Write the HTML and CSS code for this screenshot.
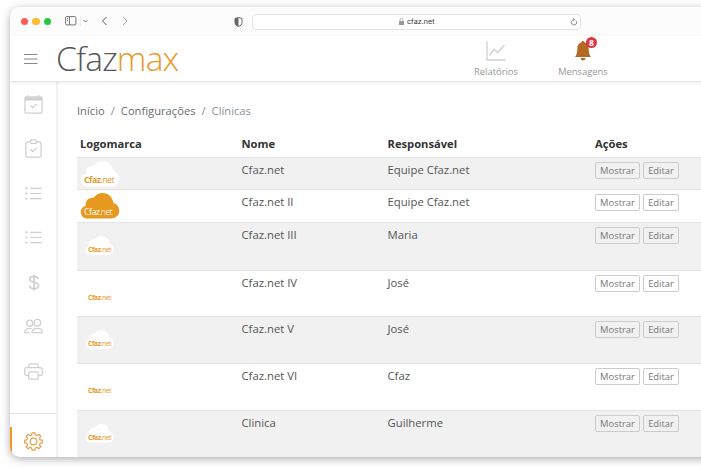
FILE: index.html
```html
<!DOCTYPE html>
<html lang="pt-BR">
<head>
<meta charset="utf-8">
<title>Cfazmax - Clínicas</title>
<link rel="stylesheet" href="styles.css">
</head>
<body>
<svg class="defs" width="0" height="0">
  <symbol id="cloud" viewBox="0 0 40 27"><path d="M7 26.500C3 26.500 0 23.500 0 19.700C0 16.500 2.200 14 5.200 13.200C4.500 8.300 8.600 4.200 13.200 5.200C15.300 1.900 18.800 0 22.700 0C28.500 0 33.200 4.300 33.800 10.200C37.400 11.300 40 14.500 40 18.300C40 23 36.500 26.500 32 26.500Z"/></symbol>
  <symbol id="list" viewBox="0 0 20 20"><path d="M6.500 4.500H18.500M6.500 10H18.500M6.500 15.500H18.500" /><path d="M1.500 4.500h2M1.500 10h2M1.500 15.500h2" stroke-width="2"/></symbol>
</svg>
<div class="window">
  <div class="toolbar">
    <div class="lights"><i class="red"></i><i class="yellow"></i><i class="green"></i></div>
    <svg class="controls" width="66" height="12" viewBox="0 0 66 12" fill="none" stroke="#777">
      <rect x=".6" y="1.600" width="10.300" height="8.300" rx="1"/><path d="M4.500 1.500v8.500M2 3.500h1M2 5.500h1"/>
      <path d="M15.500 1v10" stroke="#eee"/><path d="M18.500 5l2 2 2-2"/>
      <path d="M41.500 2L37.500 6l4 4" stroke="#555"/><path d="M58 2l4 4-4 4" stroke="#aaa"/>
    </svg>
    <svg class="shield" width="9" height="10" viewBox="0 0 9 10"><path d="M4.500.5L8 1.500V5.500C8 7.500 6.500 8.800 4.500 9.500C2.500 8.800 1 7.500 1 5.500V1.500Z" fill="#fff" stroke="#666"/><path d="M4.500.5L1 1.500V5.500C1 7.500 2.500 8.800 4.500 9.500Z" fill="#666"/></svg>
    <div class="address">
      <svg width="5" height="7" viewBox="0 0 5 7"><rect y="3" width="5" height="4" rx=".5" fill="#999"/><path d="M1 3V1.800a1.500 1.300 0 0 1 3 0V3" fill="none" stroke="#999" stroke-width=".7"/></svg>
      <span>cfaz.net</span>
      <svg class="reload" width="8" height="8" viewBox="0 0 8 8" fill="none" stroke="#777" stroke-width=".8"><path d="M6.200 2.700A2.700 2.700 0 1 1 4 1.600M3.200.2L4.700 1.600L3.200 3"/></svg>
    </div>
  </div>
  <header class="header">
    <svg class="burger" width="14" height="12" viewBox="0 0 14 12" stroke="#888" stroke-width="1.100"><path d="M0 1.500h13.500M0 6h13.500M0 10.500h13.500"/></svg>
    <div class="brand">Cfaz<span>max</span></div>
    <div class="nav reports">
      <svg width="20" height="20" viewBox="0 0 20 20" fill="none" stroke="#d2d2d2" stroke-width="1.400"><path d="M1 0V19H20M3.500 14.500L8 8.500L11.500 11.500L18.500 4"/></svg>
      <span>Relatórios</span>
    </div>
    <div class="nav messages">
      <svg width="18" height="20" viewBox="0 0 18 20" fill="#b46824"><path d="M9 0C9.900 0 10.400.5 10.400 1.300C13.400 2.100 14.700 4.500 14.700 7.500C14.700 11.500 15.300 14 17 16H1C2.700 14 3.300 11.500 3.300 7.500C3.300 4.500 4.600 2.100 7.600 1.300C7.600.5 8.100 0 9 0ZM6.500 17H11.500Q11 19.500 9 19.500T6.500 17Z"/></svg>
      <b class="badge">8</b>
      <span>Mensagens</span>
    </div>
  </header>
  <div class="body">
    <nav class="side">
      <a><svg viewBox="0 0 20 20"><rect x="1" y="2" width="18" height="17" rx="1.500"/><path d="M1 4H19" stroke-width="3.500"/><path d="M4.500 0V3M15.500 0V3M7 11l2.300 2.300 4-4"/></svg></a>
      <a><svg viewBox="0 0 20 20"><path d="M7 3H4Q2 3 2 5V17Q2 19 4 19H16Q18 19 18 17V5Q18 3 16 3H13"/><rect x="7" y="1" width="6" height="3.500" rx=".5"/><path d="M7 11l2.300 2.300 4-4"/></svg></a>
      <a><svg><use href="#list"/></svg></a>
      <a><svg><use href="#list"/></svg></a>
      <a><svg viewBox="0 0 20 20"><path d="M10.500 1.500V18.500M15 6.500C14.500 4.500 13 3.500 10.500 3.500C7.800 3.500 6 4.800 6 6.700C6 11 15.300 8.500 15.300 13.200C15.300 15.300 13.400 16.500 10.500 16.500C7.800 16.500 6 15.300 5.700 13.200" stroke-width="1.700"/></svg></a>
      <a><svg viewBox="0 0 20 20"><circle cx="6" cy="6.500" r="3.200"/><circle cx="14" cy="6" r="3.500"/><path d="M8.500 16.500C8.500 13.500 10.500 12 14 12S19.300 13.500 19.300 16.500ZM8 12.300C3.500 11 .7 13 .7 16.500H5.500"/></svg></a>
      <a><svg viewBox="0 0 20 20"><path d="M5 14H2.500Q.8 14 .8 12.300V8Q.8 6 2.800 6H17.200Q19.200 6 19.200 8V12.300Q19.200 14 17.500 14H15M5 6V3.500Q5 2 6.500 2H13.500Q15 2 15 3.500V6"/><rect x="5" y="10.500" width="10" height="7.500" rx="1"/></svg></a>
      <a class="active"><svg viewBox="0 0 20 20"><path d="M8.500.8H11.500L12 3.200L13.600 3.900L15.700 2.500L17.700 4.500L16.300 6.600L17 8.200L19.300 8.600V11.400L17 11.900L16.300 13.500L17.700 15.500L15.700 17.500L13.600 16.200L12 16.900L11.500 19.200H8.500L8 16.900L6.400 16.200L4.300 17.500L2.300 15.500L3.700 13.500L3 11.900L.7 11.400V8.600L3 8.200L3.700 6.600L2.300 4.500L4.300 2.500L6.400 3.900L8 3.200Z" stroke-linejoin="round"/><circle cx="10" cy="10" r="3.500"/></svg></a>
    </nav>
    <main>
      <div class="crumbs">Início<i>/</i>Configurações<i>/</i><span>Clínicas</span></div>
      <table>
        <thead><tr><th class="c1">Logomarca</th><th class="c2">Nome</th><th class="c3">Responsável</th><th>Ações</th></tr></thead>
        <tbody>
          <tr class="r1"><td><div class="logo"><svg><use href="#cloud"/></svg><p><b>Cfaz</b>.net</p></div></td><td>Cfaz.net</td><td>Equipe Cfaz.net</td><td><button>Mostrar</button><button>Editar</button></td></tr>
          <tr class="r2"><td><div class="logo orange"><svg><use href="#cloud"/></svg><p><b>Cfaz</b>.net</p></div></td><td>Cfaz.net II</td><td>Equipe Cfaz.net</td><td><button>Mostrar</button><button>Editar</button></td></tr>
          <tr class="r3"><td><div class="logo small"><svg><use href="#cloud"/></svg><p><b>Cfaz</b>.net</p></div></td><td>Cfaz.net III</td><td>Maria</td><td><button>Mostrar</button><button>Editar</button></td></tr>
          <tr class="r4"><td><div class="logo small"><svg><use href="#cloud"/></svg><p><b>Cfaz</b>.net</p></div></td><td>Cfaz.net IV</td><td>José</td><td><button>Mostrar</button><button>Editar</button></td></tr>
          <tr class="r5"><td><div class="logo small"><svg><use href="#cloud"/></svg><p><b>Cfaz</b>.net</p></div></td><td>Cfaz.net V</td><td>José</td><td><button>Mostrar</button><button>Editar</button></td></tr>
          <tr class="r6"><td><div class="logo small"><svg><use href="#cloud"/></svg><p><b>Cfaz</b>.net</p></div></td><td>Cfaz.net VI</td><td>Cfaz</td><td><button>Mostrar</button><button>Editar</button></td></tr>
          <tr class="r7"><td><div class="logo small"><svg><use href="#cloud"/></svg><p><b>Cfaz</b>.net</p></div></td><td>Clinica</td><td>Guilherme</td><td><button>Mostrar</button><button>Editar</button></td></tr>
        </tbody>
      </table>
    </main>
  </div>
</div>
</body>
</html>
```
FILE: styles.css
```css
* { box-sizing: border-box; }
body { margin: 0; height: 470px; overflow: hidden; background: #fff; padding: 7px 0 0 10px; font-family: "Open Sans", "Noto Sans", sans-serif; color: #555; }
.defs { display: block; height: 0; }
.window { width: 720px; height: 450px; border-radius: 10px; background: #fff; overflow: hidden; box-shadow: 0 2px 8px rgba(0,0,0,.32); }
.toolbar { height: 29px; background: #fcfcfc; display: flex; align-items: center; padding-left: 11px; }
.lights { display: flex; gap: 4.200px; width: 44px; }
.lights i { width: 7.200px; height: 7.200px; border-radius: 50%; }
.red { background: #fe5d55; }
.yellow { background: #fdbb2d; }
.green { background: #27c840; }
.controls { margin-bottom: 1px; }
.shield { margin-left: 103px; }
.address { width: 329px; height: 16px; margin-left: 9px; background: #fff; border: 1px solid #e3e3e3; border-radius: 4px; display: flex; align-items: center; font: 7.200px Inter, sans-serif; color: #333; padding-left: 146px; }
.address span { margin-left: 3px; }
.reload { margin-left: auto; margin-right: 2px; }
.header { height: 46px; border-bottom: 1px solid #e6e8e8; display: flex; box-shadow: 0 1px 3px rgba(0,0,0,.08); position: relative; }
.burger { margin: 17px 0 0 14px; }
.brand { width: 417px; margin-left: 18px; font: 300 33.500px/44px "Open Sans", sans-serif; letter-spacing: -.8px; color: #555; }
.brand span { color: #e99a2a; }
.nav { width: 48px; display: flex; flex-direction: column; align-items: center; font-size: 9.400px; line-height: 12px; color: #999; padding-top: 5px; position: relative; }
.nav span { margin-top: 5px; white-space: nowrap; }
.reports { margin-left: -1px; }
.messages { margin-left: 37px; width: 52px; }
.badge { position: absolute; left: 29px; top: 1px; width: 11px; height: 11px; border-radius: 50%; background: #dc3545; color: #fff; font-size: 8.500px; line-height: 11px; text-align: center; }
.body { display: flex; height: 375px; }
.side { width: 48px; border-right: 2px solid #f0f2f2; display: flex; flex-direction: column; flex: none; }
.side a { height: 44.500px; display: flex; align-items: center; justify-content: center; flex: none; }
.side svg { width: 19px; height: 19px; fill: none; stroke: #cfcfcf; stroke-width: 1.300; }
.side .active { margin-top: 19px; border-top: 1px solid #e2e2e2; height: 56px; padding-top: 1px; background: linear-gradient(#ee981d, #ee981d) 0 13px / 2px 26px no-repeat; }
.side .active svg { stroke: #e9a04e; }
main { flex: 1; padding: 19px 0 0 19px; }
.crumbs { font-size: 11.200px; line-height: 20px; height: 20px; color: #666d72; white-space: nowrap; }
.crumbs i { font-style: normal; margin: 0 6px; color: #868e96; }
.crumbs span { color: #8b939b; }
table { width: 643px; border-collapse: separate; border-spacing: 0; table-layout: fixed; font-size: 11.300px; margin-top: 10px; }
th { text-align: left; height: 26px; padding: 0 0 0 3px; color: #333; font-size: 11.200px; line-height: 18px; }
.c1 { width: 161.500px; }
.c2 { width: 146px; }
.c3 { width: 207.500px; }
td { padding: 4px 0 0 3px; vertical-align: top; border-top: 1px solid #e2e3e4; line-height: 16px; white-space: nowrap; }
tbody tr:nth-child(odd) { background: #f1f1f1; }
.r1 { height: 32px; }
.r2 { height: 33px; }
.r3 { height: 48px; }
.r4 { height: 46px; }
.r5, .r6, .r7 { height: 47px; }
button { font: 9.400px/15px "Open Sans", sans-serif; color: #777; height: 17px; border: 1px solid #ccc; border-radius: 2px; background: transparent; padding: 0; margin: 0 3px 0 0; width: 45px; vertical-align: top; }
button + button { width: 36px; margin: 0; }
.logo { width: 40px; height: 27px; margin: -1px 0 -6px; position: relative; color: #e99a2a; }
.logo svg { display: block; width: 40px; height: 26px; fill: #fff; }
.logo p { position: absolute; left: 4px; top: 12.500px; margin: 0; font: 8.800px/12px "Open Sans", sans-serif; letter-spacing: -.55px; }
.logo.orange { color: #fff; }
.logo.orange p { font-weight: 300; }
.logo.orange svg { fill: #e6981f; }
.logo.small { width: 29px; height: 19px; margin: 9px 0 0 5px; }
.logo.small svg { width: 29px; height: 19px; }
.logo.small p { left: 3px; top: 8px; font-size: 6.800px; line-height: 11px; letter-spacing: -.45px; }
```
